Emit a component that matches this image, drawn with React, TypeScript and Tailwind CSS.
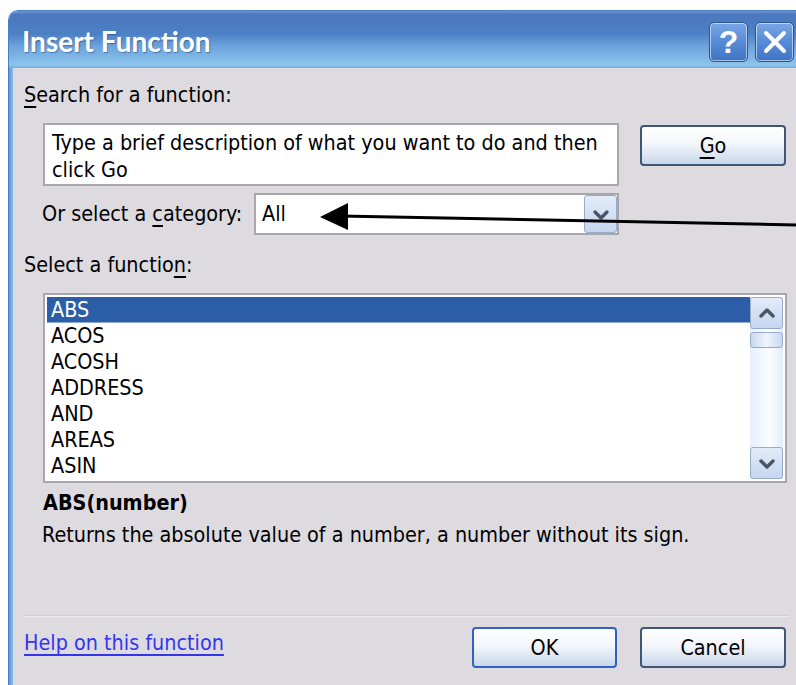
import React from "react";

const FUNCTIONS = ["ABS", "ACOS", "ACOSH", "ADDRESS", "AND", "AREAS", "ASIN"];

const uiFont = "font-['DejaVu_Sans_Condensed','DejaVu_Sans',sans-serif] text-[21.4px] leading-[26px] text-black";

function Chevron({ dir }: { dir: "up" | "down" }) {
  const points = dir === "up" ? "4,11 10,5 16,11" : "4,6 10,12 16,6";
  return (
    <svg width="20" height="17" viewBox="0 0 20 17">
      <polyline points={points} fill="none" stroke="#4b5466" strokeWidth="3.4" strokeLinecap="round" strokeLinejoin="round" />
    </svg>
  );
}

function CaptionButton({ children }: { children: React.ReactNode }) {
  return (
    <div className="w-[39px] h-[40px] rounded-[5px] border border-[#2d5496] shadow-[inset_0_0_0_1px_rgba(255,255,255,0.55)] bg-[linear-gradient(180deg,#7aa6e4_0%,#578bd6_50%,#3f74c6_100%)] flex items-center justify-center">
      {children}
    </div>
  );
}

function PushButton({ label, accel, isDefault }: { label: string; accel?: number; isDefault?: boolean }) {
  return (
    <div
      className={
        isDefault
          ? "w-[145px] h-[41px] rounded-[4px] border-2 border-[#2f62c2] bg-[linear-gradient(180deg,#ffffff_0%,#f3f6fb_45%,#c9d7ec_100%)] flex items-center justify-center"
          : "w-[146px] h-[41px] rounded-[4px] border-2 border-[#3f5677] bg-[linear-gradient(180deg,#ffffff_0%,#f3f6fb_45%,#c9d7ec_100%)] flex items-center justify-center"
      }
    >
      <span className={uiFont}>
        {accel === undefined ? (
          label
        ) : (
          <>
            {label.slice(0, accel)}
            <span className="underline underline-offset-[4px]">{label[accel]}</span>
            {label.slice(accel + 1)}
          </>
        )}
      </span>
    </div>
  );
}

function ScrollButton({ dir }: { dir: "up" | "down" }) {
  return (
    <div className="h-[32px] rounded-[3px] border border-[#98abc9] bg-[linear-gradient(180deg,#e3ecf9_0%,#c5d6ef_100%)] flex items-center justify-center">
      <Chevron dir={dir} />
    </div>
  );
}

export default function App() {
  return (
    <div className="relative w-[796px] h-[685px] overflow-hidden bg-white">
      <div className="ml-[8px] mt-[10px] w-[800px] h-[680px] flex flex-col rounded-tl-[10px] overflow-hidden border-t border-l border-[#4d7cc6]">
        {/* caption */}
        <div className="h-[57px] shrink-0 flex items-center justify-between bg-[linear-gradient(180deg,#6f97d6_0%,#4b77bd_6%,#4c80c6_40%,#6da3dc_62%,#8cc5eb_95%,#74a9e0_100%)]">
          <span className="ml-[13px] mt-[2px] font-['Lato',sans-serif] font-bold text-[28px] text-white [text-shadow:1px_1px_1px_rgba(20,50,110,0.45)]">
            Insert Function
          </span>
          <div className="flex gap-[7px] mr-[14px] self-start mt-[11px]">
            <CaptionButton>
              <span className="font-['Liberation_Sans',sans-serif] font-bold text-[32px] leading-none text-white">?</span>
            </CaptionButton>
            <CaptionButton>
              <svg width="26" height="26" viewBox="0 0 26 26">
                <path d="M4 4 L22 22 M22 4 L4 22" stroke="white" strokeWidth="4" strokeLinecap="round" />
              </svg>
            </CaptionButton>
          </div>
        </div>

        <div className="flex flex-1">
          {/* left frame edge */}
          <div className="w-[4px] bg-[linear-gradient(90deg,#5f92d8_0%,#8dbdee_100%)]" />

          <div className={`flex-1 bg-[#dddbe0] flex flex-col ${uiFont}`}>
            <div className="ml-[11px] mt-[14px]">
              <span className="underline underline-offset-[4px]">S</span>earch for a function:
            </div>

            <div className="flex mt-[15px] ml-[30px]">
              <div className="w-[576px] h-[63px] border-2 border-[#a8a8ac] bg-white pl-[7px] pt-[4px] leading-[27px]">
                Type a brief description of what you want to do and then
                <br />
                click Go
              </div>
              <div className="ml-[21px] mt-[2px]">
                <PushButton label="Go" accel={0} />
              </div>
            </div>

            <div className="flex items-center mt-[7px] ml-[29px]">
              <div className="w-[212px]">
                Or select a <span className="underline underline-offset-[4px]">c</span>ategory:
              </div>
              <div className="w-[365px] h-[42px] border-2 border-[#a8a8ac] bg-white flex items-center">
                <span className="flex-1 pl-[6px]">All</span>
                <div className="w-[33px] h-[38px] rounded-[3px] border border-[#98abc9] bg-[linear-gradient(180deg,#e3ecf9_0%,#c5d6ef_100%)] flex items-center justify-center">
                  <Chevron dir="down" />
                </div>
              </div>
            </div>

            <div className="ml-[11px] mt-[17px]">
              Select a functio<span className="underline underline-offset-[4px]">n</span>:
            </div>

            {/* function list */}
            <div className="ml-[30px] mt-[15px] w-[744px] h-[190px] border-2 border-[#a8a8ac] bg-white p-[2px] flex">
              <div className="flex-1 overflow-hidden">
                {FUNCTIONS.map((name, i) => (
                  <div
                    key={name}
                    className={i === 0 ? "h-[26px] pl-[4px] bg-[#2c5ea7] text-white border-b border-[#8fa9d2]" : "h-[26px] pl-[4px]"}
                  >
                    {name}
                  </div>
                ))}
              </div>
              <div className="w-[33px] flex flex-col bg-[linear-gradient(90deg,#e6effb_0%,#fbfdff_60%,#e3ecf9_100%)]">
                <ScrollButton dir="up" />
                <div className="mt-[3px] h-[16px] rounded-[3px] border border-[#98abc9] bg-[linear-gradient(90deg,#c9d9f0_0%,#eef4fc_50%,#c9d9f0_100%)]" />
                <div className="flex-1" />
                <ScrollButton dir="down" />
              </div>
            </div>

            <div className="ml-[30px] mt-[7px] font-bold">ABS(number)</div>
            <div className="ml-[29px] mt-[6px]">Returns the absolute value of a number, a number without its sign.</div>

            <div className="ml-[10px] mt-[67px] w-[766px] h-[2px] border-t border-[#d0ced5] border-b border-b-[#ebeaee]" />

            <div className="ml-[11px] mt-[10px] w-[762px] flex items-start justify-between">
              <span className="mt-[3px] text-[#3535ee] underline underline-offset-[4px]">Help on this function</span>
              <div className="flex gap-[23px]">
                <PushButton label="OK" isDefault />
                <PushButton label="Cancel" />
              </div>
            </div>
          </div>
        </div>
      </div>

      {/* annotation arrow pointing at the category box */}
      <svg className="absolute left-0 top-0 pointer-events-none" width="796" height="685">
        <line x1="340" y1="216" x2="796" y2="225" stroke="black" strokeWidth="3" />
        <polygon points="320,217 348,203 348,230" fill="black" />
      </svg>
    </div>
  );
}
